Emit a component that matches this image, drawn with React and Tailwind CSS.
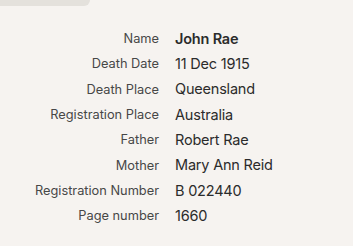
import React from 'react';

const rows = [
  ['Name', 'John Rae', true],
  ['Death Date', '11 Dec 1915'],
  ['Death Place', 'Queensland'],
  ['Registration Place', 'Australia'],
  ['Father', 'Robert Rae'],
  ['Mother', 'Mary Ann Reid'],
  ['Registration Number', 'B 022440'],
  ['Page number', '1660'],
];

const App = () => {
  return (
    <div className="w-[353px] h-[246px] bg-[#f6f3f0] overflow-hidden font-['Inter',sans-serif]">
      <div className="w-[90px] h-[6px] bg-[#e4e1dc] rounded-br-[10px]"></div>
      <div className="pt-[20px] grid grid-cols-[159px_1fr] gap-x-4">
        {rows.map(([label, value, bold]) => (
          <React.Fragment key={label}>
            <div className="h-[25.3px] flex items-center justify-end text-[12.8px] text-[#474747]">
              {label}
            </div>
            <div
              className={`h-[25.3px] flex items-center text-[14.5px] tracking-[-0.2px] text-[#2b2b2b] ${bold ? 'font-semibold' : ''}`}
            >
              {value}
            </div>
          </React.Fragment>
        ))}
      </div>
    </div>
  );
};

export default App;
